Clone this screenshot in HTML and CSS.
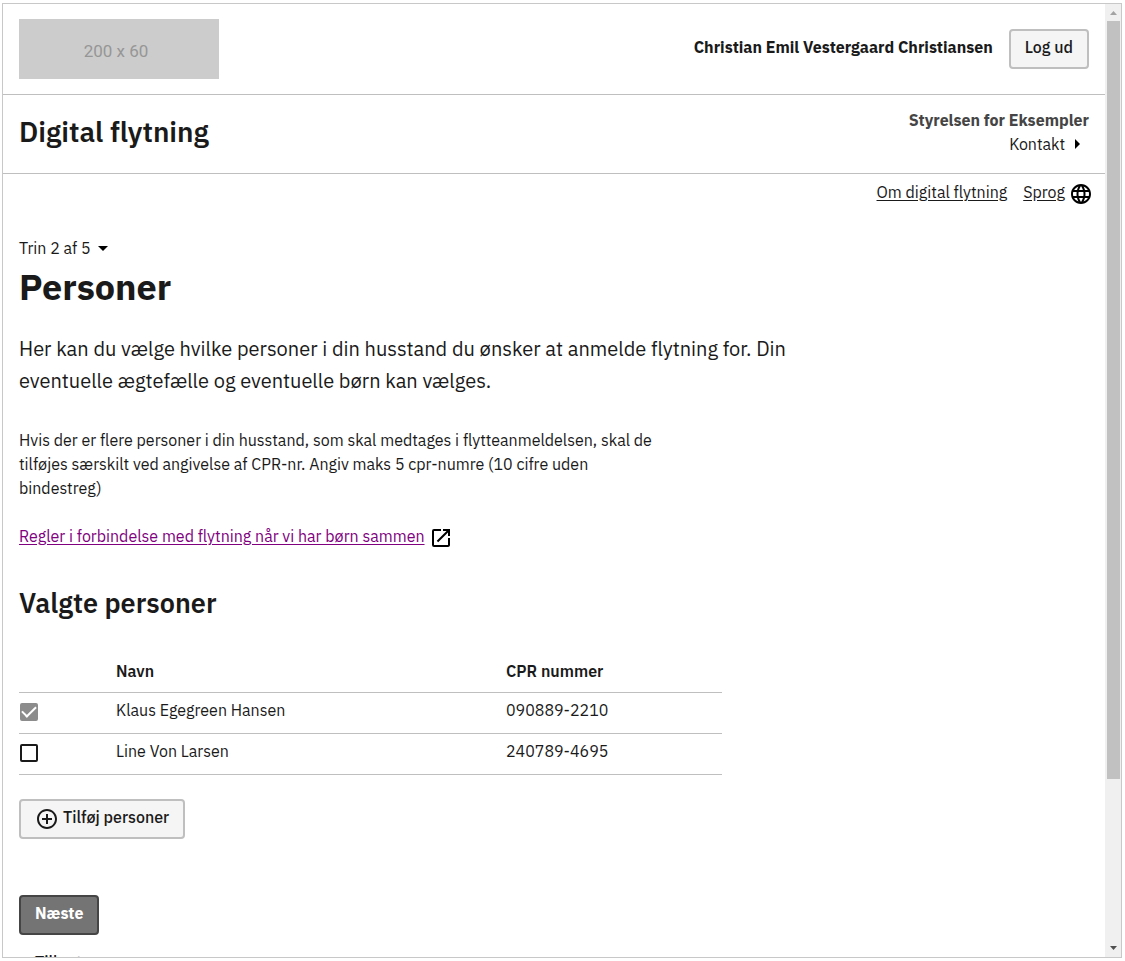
FILE: index.html
```html
<!DOCTYPE html>
<html lang="da">
<head>
<meta charset="utf-8">
<title>Digital flytning – Personer</title>
<link rel="stylesheet" href="styles.css">
</head>
<body>
<div class="frame">
  <div class="page">
    <header>
      <div class="bar bar-top">
        <svg class="logo" viewBox="0 0 200 60" role="img" aria-label="Logo">
          <rect width="200" height="60" fill="#ccc"/>
          <text class="logo-text" x="97" y="38" text-anchor="middle">200 x 60</text>
        </svg>
        <div class="user">
          <strong class="user-name">Christian Emil Vestergaard Christiansen</strong>
          <button class="button" type="button">Log ud</button>
        </div>
      </div>
      <div class="bar bar-title">
        <p class="solution">Digital flytning</p>
        <div class="agency">
          <strong class="agency-name">Styrelsen for Eksempler</strong>
          <button class="toggle" type="button">Kontakt
            <svg class="caret" viewBox="0 0 24 24"><path d="M10 17l5-5-5-5v10z"/></svg>
          </button>
        </div>
      </div>
      <nav class="links">
        <a class="link" href="#om">Om digital flytning</a>
        <a class="link link-icon" href="#sprog"><span class="link-label">Sprog</span>
          <svg class="icon" viewBox="0 0 24 24"><path d="M11.990 2C6.470 2 2 6.480 2 12s4.470 10 9.990 10C17.520 22 22 17.520 22 12S17.520 2 11.990 2zm6.930 6h-2.950a15.650 15.650 0 0 0-1.380-3.560A8.030 8.030 0 0 1 18.920 8zM12 4.040c.83 1.200 1.480 2.530 1.910 3.960h-3.820c.43-1.430 1.080-2.760 1.910-3.960zM4.260 14C4.100 13.360 4 12.690 4 12s.1-1.360.26-2h3.380c-.08.66-.14 1.320-.14 2s.06 1.340.14 2H4.260zm.82 2h2.950c.32 1.250.78 2.450 1.380 3.560A7.987 7.987 0 0 1 5.080 16zm2.950-8H5.080a7.987 7.987 0 0 1 4.330-3.560A15.650 15.650 0 0 0 8.030 8zM12 19.960c-.83-1.200-1.480-2.530-1.910-3.960h3.820c-.43 1.430-1.080 2.760-1.910 3.960zM14.340 14H9.660c-.09-.66-.16-1.320-.16-2s.07-1.350.16-2h4.680c.09.65.16 1.320.16 2s-.07 1.340-.16 2zm.25 5.560c.6-1.110 1.060-2.310 1.380-3.560h2.950a8.030 8.030 0 0 1-4.330 3.560zM16.360 14c.08-.66.14-1.320.14-2s-.06-1.340-.14-2h3.380c.16.640.26 1.310.26 2s-.1 1.360-.26 2h-3.380z"/></svg>
        </a>
      </nav>
    </header>
    <main class="content">
      <button class="toggle" type="button">Trin 2 af 5
        <svg class="caret" viewBox="0 0 24 24"><path d="M7 10l5 5 5-5z"/></svg>
      </button>
      <h1 class="heading">Personer</h1>
      <p class="lead">Her kan du vælge hvilke personer i din husstand du ønsker at anmelde flytning for. Din eventuelle ægtefælle og eventuelle børn kan vælges.</p>
      <p class="text">Hvis der er flere personer i din husstand, som skal medtages i flytteanmeldelsen, skal de tilføjes særskilt ved angivelse af CPR-nr. Angiv maks 5 cpr-numre (10 cifre uden bindestreg)</p>
      <a class="link link-icon link-visited" href="#regler"><span class="link-label">Regler i forbindelse med flytning når vi har børn sammen</span>
        <svg class="icon" viewBox="0 0 24 24"><path d="M19 19H5V5h7V3H5a2 2 0 0 0-2 2v14a2 2 0 0 0 2 2h14c1.100 0 2-.9 2-2v-7h-2v7zM14 3v2h3.590l-9.830 9.830 1.410 1.410L19 6.410V10h2V3h-7z"/></svg>
      </a>
      <h2 class="subheading">Valgte personer</h2>
      <table class="people">
        <colgroup><col class="col-check"><col class="col-name"><col></colgroup>
        <thead>
          <tr><td></td><th scope="col">Navn</th><th scope="col">CPR nummer</th></tr>
        </thead>
        <tbody>
          <tr>
            <td><input class="check" type="checkbox" id="p1" checked disabled></td>
            <td><label for="p1">Klaus Egegreen Hansen</label></td>
            <td>090889-2210</td>
          </tr>
          <tr>
            <td><input class="check" type="checkbox" id="p2"></td>
            <td><label for="p2">Line Von Larsen</label></td>
            <td>240789-4695</td>
          </tr>
        </tbody>
      </table>
      <button class="button" type="button">
        <svg class="icon" viewBox="0 0 24 24"><path d="M13 7h-2v4H7v2h4v4h2v-4h4v-2h-4V7zm-1-5C6.480 2 2 6.480 2 12s4.480 10 10 10 10-4.480 10-10S17.520 2 12 2zm0 18c-4.410 0-8-3.590-8-8s3.590-8 8-8 8 3.590 8 8-3.590 8-8 8z"/></svg>
        Tilføj personer</button>
      <div class="actions">
        <button class="button button-primary" type="button">Næste</button>
        <button class="button button-plain" type="button">Tilbage</button>
      </div>
    </main>
  </div>
  <div class="scrollbar" aria-hidden="true">
    <svg class="arrow arrow-up" viewBox="0 0 16 17"><path d="M5 11h7L8.500 7z"/></svg>
    <div class="track"><div class="thumb"></div></div>
    <svg class="arrow" viewBox="0 0 16 17"><path d="M5 6h7l-3.500 4z"/></svg>
  </div>
</div>
</body>
</html>
```
FILE: styles.css
```css
* {
  box-sizing: border-box;
}

body {
  margin: 0;
  height: 100vh;
  padding: 3px 3px 3px 2px;
  background: #fff;
  color: #1a1a1a;
  font: 400 16px/24px "IBM Plex Sans", "Noto Sans", sans-serif;
  overflow: hidden;
}

h1, h2, p {
  margin: 0;
}

svg {
  display: block;
  flex: none;
}

.frame {
  display: flex;
  height: 100%;
  border: 1px solid #c8c8c8;
}

.page {
  flex: 1;
  min-width: 0;
  overflow: hidden;
}

.bar {
  display: flex;
  align-items: center;
  justify-content: space-between;
  padding: 15px 16px;
  border-bottom: 1px solid #bfbfbf;
}

.bar-title {
  padding: 13px 16px 17px;
}

.logo {
  width: 200px;
  height: 60px;
}

.logo-text {
  font: 17px Roboto, sans-serif;
  fill: #969696;
}

.user {
  display: flex;
  align-items: center;
  gap: 16px;
}

.user-name,
.agency-name {
  font-weight: 700;
}

.user-name {
  padding-bottom: 4px;
}

.agency-name {
  color: #454545;
}

.solution {
  font-size: 28px;
  line-height: 36px;
  font-weight: 600;
}

.agency {
  display: flex;
  flex-direction: column;
  align-items: flex-end;
}

.toggle {
  display: flex;
  align-items: center;
  padding: 0;
  border: 0;
  background: none;
  color: inherit;
  font: inherit;
}

.caret {
  width: 24px;
  height: 24px;
  fill: #000;
}

.links {
  display: flex;
  justify-content: flex-end;
  gap: 16px;
  padding: 6px 12px 0 16px;
}

.link {
  color: inherit;
  text-underline-offset: 2px;
}

.link-icon {
  display: flex;
  align-items: flex-start;
  gap: 4px;
  text-decoration: none;
}

.link-icon .icon {
  margin: 2px 0 -2px;
}

.link-label {
  text-decoration: underline;
}

.link-visited {
  color: #800080;
}

.icon {
  width: 24px;
  height: 24px;
  fill: #000;
}

.content {
  display: flex;
  flex-direction: column;
  align-items: flex-start;
  padding: 32px 16px;
}

.heading {
  margin-top: 3px;
  font-size: 36px;
  line-height: 48px;
  font-weight: 700;
}

.lead {
  max-width: 784px;
  margin: 22px 0 31px;
  font-size: 20px;
  line-height: 32px;
}

.text {
  max-width: 640px;
  margin-bottom: 24px;
}

.subheading {
  margin: 39px 0 32px;
  font-size: 27px;
  line-height: 32px;
  font-weight: 600;
}

.people {
  width: 703px;
  max-width: 100%;
  margin-bottom: 24px;
  table-layout: fixed;
  border-collapse: collapse;
}

.col-check {
  width: 97px;
}

.col-name {
  width: 390px;
}

.people th,
.people td {
  height: 41px;
  padding: 5px 0 11px;
  border-bottom: 1px solid #bfbfbf;
  text-align: left;
  font-weight: 400;
}

.people th {
  padding: 8px 0;
  font-weight: 600;
}

.check {
  display: grid;
  place-items: center;
  appearance: none;
  width: 18px;
  height: 18px;
  margin: 4px 0 0 1px;
  border: 2px solid #1a1a1a;
  border-radius: 2px;
  background: #fff;
}

.check:disabled {
  border-color: #8c8c8c;
  background: #8c8c8c;
}

.check:checked::before {
  content: "";
  width: 12px;
  height: 6px;
  margin-bottom: 4px;
  border: solid #fff;
  border-width: 0 0 2px 2px;
  transform: rotate(-45deg);
}

.button {
  display: flex;
  align-items: center;
  gap: 4px;
  height: 40px;
  padding: 0 14px 4px;
  border: 2px solid #bfbfbf;
  border-radius: 4px;
  background: #f5f5f5;
  color: #1a1a1a;
  font: inherit;
  font-weight: 500;
}

.button .icon {
  margin-top: 4px;
  fill: #1a1a1a;
}

.actions {
  display: flex;
  flex-direction: column;
  align-items: flex-start;
  gap: 9px;
  margin-top: 56px;
}

.button-primary {
  border-color: #454545;
  background: #747474;
  color: #fff;
  font-weight: 700;
}

.button-plain {
  border-color: transparent;
  background: none;
}

.scrollbar {
  display: flex;
  flex-direction: column;
  width: 16px;
  background: #f0f0f0;
}

.arrow {
  width: 16px;
  height: 17px;
  fill: #505050;
}

.arrow-up {
  fill: #a3a3a3;
}

.track {
  flex: 1;
  padding: 0 1px 0 2px;
}

.thumb {
  height: 82.5%;
  background: #c1c1c1;
}
```
